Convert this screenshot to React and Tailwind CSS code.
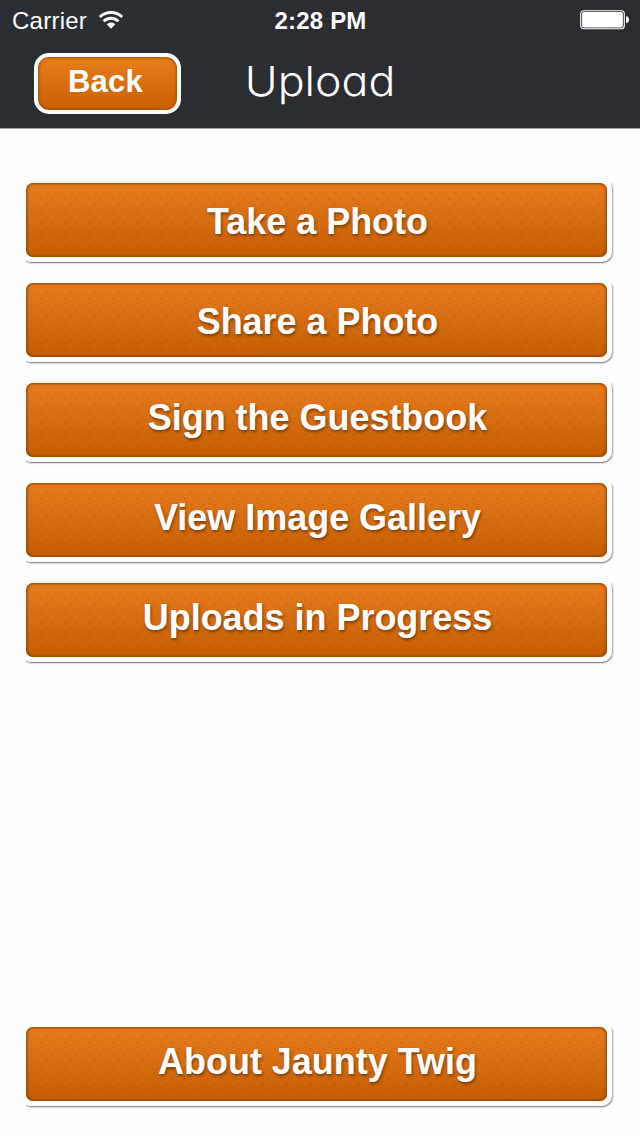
import React from "react";

const actions = [
  { label: "Take a Photo", offset: "pt-[3px]" },
  { label: "Share a Photo", offset: "pt-[3px]" },
  { label: "Sign the Guestbook", offset: "pb-[5px]" },
  { label: "View Image Gallery", offset: "pb-[5px]" },
  { label: "Uploads in Progress", offset: "pb-[5px]" },
];

function WifiIcon() {
  return (
    <svg className="w-[26px] h-[20px]" viewBox="0 0 26 20" fill="none" stroke="white">
      <path strokeWidth="2.9" d="M1.8 7C8.2 1 17.8 1 24.2 7" />
      <path strokeWidth="2.9" d="M5.6 11.2C9.8 7.2 16.2 7.2 20.4 11.2" />
      <path fill="white" stroke="none" d="M8.7 14.3C11.2 11.8 14.8 11.8 17.3 14.3L13 18.8Z" />
    </svg>
  );
}

function BatteryIcon() {
  return (
    <svg className="w-[50px] h-[20px]" viewBox="0 0 50 20">
      <rect x="0.7" y="0.7" width="43.6" height="18.1" rx="3" fill="none" stroke="white" strokeWidth="1.1" />
      <rect x="2.1" y="2.1" width="40.8" height="15.3" rx="1.6" fill="white" />
      <path fill="white" d="M46 6.3C50 6.3 50 13.2 46 13.2Z" />
    </svg>
  );
}

function StatusBar() {
  return (
    <div className="grid grid-cols-[1fr_auto_1fr] items-center h-10 pl-3 pr-[10px]">
      <div className="flex items-center gap-[11px]">
        <span className="text-[24px] leading-none tracking-[0.25px] pt-[2px]">Carrier</span>
        <WifiIcon />
      </div>
      <span className="text-[24px] leading-none font-bold tracking-[0.2px] pt-[2px] pr-[1px]">2:28 PM</span>
      <div className="flex justify-end">
        <BatteryIcon />
      </div>
    </div>
  );
}

function Dots({ id }) {
  return (
    <svg className="absolute inset-0 w-full h-full">
      <defs>
        <pattern id={id} width="12" height="12" patternUnits="userSpaceOnUse">
          <rect x="2" y="3" width="1.3" height="1.3" fill="#8f4c00" fillOpacity="0.42" />
          <rect x="8" y="9" width="1.3" height="1.3" fill="#8f4c00" fillOpacity="0.42" />
          <rect x="8" y="3" width="1" height="1" fill="#ff9a3a" fillOpacity="0.28" />
          <rect x="2" y="9" width="1" height="1" fill="#ff9a3a" fillOpacity="0.28" />
        </pattern>
      </defs>
      <rect x="4" y="4" width="98%" height="62" fill={`url(#${id})`} />
    </svg>
  );
}

function MenuButton({ label, offset }) {
  const id = "dots-" + label.toLowerCase().replaceAll(" ", "-");
  return (
    <button className="block w-[591px] h-[84px] shrink-0 p-[5px] bg-white rounded-[10px] shadow-[0_1px_1px_rgba(70,70,80,0.45),1px_1px_2px_rgba(80,80,90,0.5)] [clip-path:inset(5px_-5px_-6px_5px)] cursor-pointer">
      <span className={`relative flex items-center justify-center h-full rounded-[7px] overflow-hidden bg-linear-to-b from-[#e67c1d] to-[#c55d00] shadow-[inset_0_0_3px_1px_#8a4200] ${offset}`}>
        <Dots id={id} />
        <span className="relative left-px text-[36px] leading-none font-bold text-white tracking-[-0.03px] [text-shadow:1px_2px_3px_rgba(70,35,0,0.6)]">
          {label}
        </span>
      </span>
    </button>
  );
}

export default function App() {
  return (
    <div className="flex flex-col w-[640px] h-[1136px] overflow-hidden bg-[#fefefe] font-['Liberation_Sans',Arial,sans-serif]">
      <header className="h-[129px] shrink-0 text-white bg-linear-to-r from-[#2a2e32] to-[#2c2c31] border-b border-[#a5a5a8]">
        <StatusBar />
        <div className="grid grid-cols-[1fr_auto_1fr] items-start px-[34px] pt-[13px]">
          <button className="w-[147px] h-[61px] rounded-[15px] border-4 border-white bg-linear-to-b from-[#e87d1b] to-[#c96000] shadow-[inset_0_0_3px_1px_#a55000] text-[31px] leading-none font-bold tracking-[0.2px] pb-[5px] pr-1 cursor-pointer">
            Back
          </button>
          {/* cv11 switches to the single-storey a */}
          <h1 className="font-['Inter',sans-serif] font-light text-[41px] leading-[56px] scale-x-[1.09] [font-feature-settings:'cv11']">
            Upload
          </h1>
          <span />
        </div>
      </header>

      <main className="flex flex-col flex-1 pt-[49px] pb-[30px] pl-[21px]">
        <div className="flex flex-col gap-4">
          {actions.map((action) => (
            <MenuButton key={action.label} label={action.label} offset={action.offset} />
          ))}
        </div>
        <div className="mt-auto">
          <MenuButton label="About Jaunty Twig" offset="pb-[5px]" />
        </div>
      </main>
    </div>
  );
}
